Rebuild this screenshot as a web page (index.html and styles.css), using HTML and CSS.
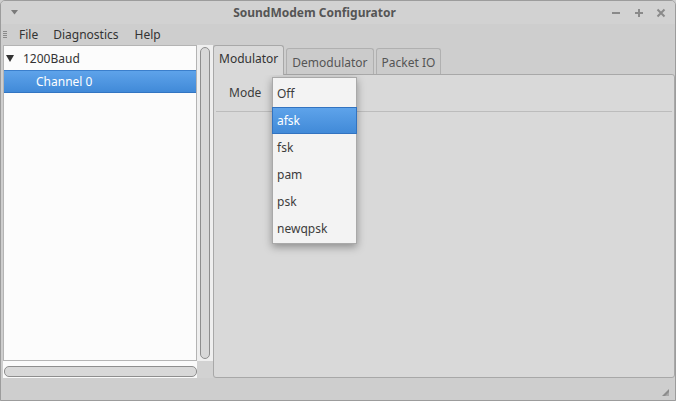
FILE: index.html
```html
<!DOCTYPE html>
<html>
<head>
<meta charset="utf-8">
<title>SoundModem Configurator</title>
<link rel="stylesheet" href="styles.css">
</head>
<body>
<div class="window">
  <div class="titlebar">
    <div class="tb-menu">
      <svg width="7" height="5" viewBox="0 0 7 5"><path d="M0 0 L7 0 L3.5 4.5 Z" fill="#7a7a7a"/></svg>
    </div>
    <div class="tb-title">SoundModem Configurator</div>
    <div class="tb-buttons">
      <svg width="10" height="10" viewBox="0 0 10 10"><path d="M1 5 H9" stroke="#8a8a8a" stroke-width="2"/></svg>
      <svg width="10" height="10" viewBox="0 0 10 10"><path d="M1 5 H9 M5 1 V9" stroke="#8a8a8a" stroke-width="2"/></svg>
      <svg width="10" height="10" viewBox="0 0 10 10"><path d="M1.5 1.5 L8.5 8.5 M8.5 1.5 L1.5 8.5" stroke="#8a8a8a" stroke-width="2"/></svg>
    </div>
  </div>
  <div class="menubar">
    <div class="grip">
      <span></span><span></span><span></span><span></span>
    </div>
    <div class="menu-item">File</div>
    <div class="menu-item">Diagnostics</div>
    <div class="menu-item">Help</div>
  </div>
  <div class="main">
    <div class="left">
      <div class="tree-row">
        <div class="tree">
          <div class="node">
            <svg class="expander" width="8" height="7" viewBox="0 0 8 7"><path d="M0 0 H8 L4 7 Z" fill="#333"/></svg>
            <span>1200Baud</span>
          </div>
          <div class="node child selected"><span>Channel 0</span></div>
        </div>
        <div class="vscroll-area"><div class="vtrough"></div></div>
      </div>
      <div class="hscroll-row">
        <div class="hscroll-area"><div class="htrough"></div></div>
        <div class="corner"></div>
      </div>
    </div>
    <div class="right">
      <div class="tabs">
        <div class="tab active">Modulator</div>
        <div class="tab">Demodulator</div>
        <div class="tab">Packet IO</div>
      </div>
      <div class="panel">
        <div class="mode-row">
          <span class="label">Mode</span>
        </div>
        <div class="panel-body"></div>
      </div>
    </div>
  </div>
  <div class="statusbar">
    <svg class="sizegrip" width="9" height="9" viewBox="0 0 9 9">
      <path d="M8 1 V8 H1 Z" fill="#8c8c8c"/>
      <path d="M8 4 V8 H4 Z" fill="#a8a8a8"/>
    </svg>
  </div>
</div>
<div class="popup">
  <div class="item">Off</div>
  <div class="item hl">afsk</div>
  <div class="item">fsk</div>
  <div class="item">pam</div>
  <div class="item">psk</div>
  <div class="item">newqpsk</div>
</div>
</body>
</html>
```
FILE: styles.css
```css
* { box-sizing: border-box; }
html, body {
  margin: 0;
  padding: 0;
  width: 676px;
  height: 401px;
  overflow: hidden;
  background: #cecece;
}
body {
  font-family: "Noto Sans", "DejaVu Sans", sans-serif;
  font-size: 12px;
  color: #3a3a3a;
  position: relative;
}
.window {
  width: 676px;
  height: 401px;
  border: 1px solid #9c9c9c;
  border-radius: 5px 5px 0 0;
  background: #cecece;
  display: flex;
  flex-direction: column;
  overflow: hidden;
}
.titlebar {
  height: 23px;
  flex: none;
  display: flex;
  align-items: center;
  background: #d2d2d2;
}
.tb-menu {
  width: 24px;
  padding-left: 10px;
  display: flex;
  align-items: center;
  padding-bottom: 1px;
}
.tb-title {
  flex: 1;
  text-align: center;
  font-weight: bold;
  color: #555;
  font-size: 12px;
  padding-left: 3px;
}
.tb-buttons {
  display: flex;
  gap: 12px;
  padding-right: 9px;
  padding-left: 10px;
}
.tb-buttons svg:first-child { margin-right: 1px; }
.menubar {
  height: 21px;
  flex: none;
  display: flex;
  align-items: center;
}
.grip {
  width: 11px;
  padding-left: 2px;
  display: flex;
  flex-direction: column;
  gap: 1px;
}
.grip span {
  display: block;
  width: 4px;
  height: 1px;
  background: #8a8a8a;
}
.menu-item {
  padding: 0 7px;
  color: #333;
}
.menu-item:nth-child(3) { padding-left: 8px; }
.menu-item:last-child { padding-left: 9px; }
.main {
  flex: 1;
  display: flex;
  min-height: 0;
}
.left {
  width: 212px;
  display: flex;
  flex-direction: column;
  padding-left: 2px;
}
.tree-row {
  flex: 1;
  display: flex;
}
.tree {
  width: 194px;
  background: #fcfcfc;
  border: 1px solid #b4b4b4;
  padding-top: 1px;
}
.node {
  height: 23px;
  display: flex;
  align-items: center;
  color: #333;
}
.expander {
  margin-left: 2px;
  margin-right: 9px;
}
.node.child {
  padding-left: 32px;
}
.node.selected {
  background: linear-gradient(#5ea3ea, #418ad8);
  border-top: 1px solid #3b7fcc;
  border-bottom: 1px solid #3275c2;
  color: #fff;
}
.vscroll-area {
  width: 16px;
  background: #efefef;
  padding: 2px 3px 2px 3px;
  display: flex;
}
.vtrough {
  flex: 1;
  border: 1px solid #8e8e8e;
  border-radius: 5px;
  background: #d8d8d8;
}
.hscroll-row {
  height: 17px;
  display: flex;
}
.hscroll-area {
  width: 194px;
  background: #fafafa;
  padding: 5px 0 1px 1px;
  display: flex;
}
.htrough {
  flex: 1;
  border: 1px solid #8e8e8e;
  border-radius: 5px;
  background: #d8d8d8;
}
.corner {
  width: 16px;
  background: #d2d2d2;
}
.right {
  flex: 1;
  display: flex;
  flex-direction: column;
}
.tabs {
  height: 29px;
  display: flex;
  align-items: flex-end;
  gap: 2px;
  position: relative;
  z-index: 1;
}
.tab {
  height: 26px;
  padding: 0 5px;
  border: 1px solid #b0b0b0;
  border-bottom: none;
  border-radius: 3px 3px 0 0;
  background: #cbcbcb;
  color: #555;
  display: flex;
  align-items: center;
  padding-top: 1px;
}
.tab.active {
  height: 30px;
  margin-bottom: -1px;
  background: #d9d9d9;
  color: #333;
  padding-bottom: 5px;
  border-color: #a8a8a8;
}
.panel {
  flex: 1;
  background: #d9d9d9;
  border: 1px solid #a8a8a8;
  border-radius: 0 3px 3px 3px;
  display: flex;
  flex-direction: column;
}
.mode-row {
  height: 37px;
  flex: none;
  display: flex;
  align-items: center;
  padding-left: 13px;
  border-bottom: 1px solid #bcbcbc;
  margin: 0 2px;
  padding-bottom: 1px;
}
.label { color: #3c3c3c; }
.panel-body { flex: 1; }
.statusbar {
  height: 22px;
  flex: none;
  display: flex;
  align-items: flex-end;
  justify-content: flex-end;
  padding: 0 5px 3px 0;
}
.popup {
  position: absolute;
  left: 272px;
  top: 77px;
  width: 85px;
  height: 167px;
  background: #f3f3f3;
  border: 1px solid #a9a9a9;
  box-shadow: 0 3px 8px rgba(0,0,0,0.35);
  padding-top: 2px;
}
.item {
  height: 27px;
  display: flex;
  align-items: center;
  padding-left: 4px;
  color: #3c3c3c;
}
.item.hl {
  background: linear-gradient(#5ea3ea, #418ad8);
  border: 1px solid #3273c0;
  margin: 0 -1px;
  padding-left: 4px;
  color: #fff;
}
```
